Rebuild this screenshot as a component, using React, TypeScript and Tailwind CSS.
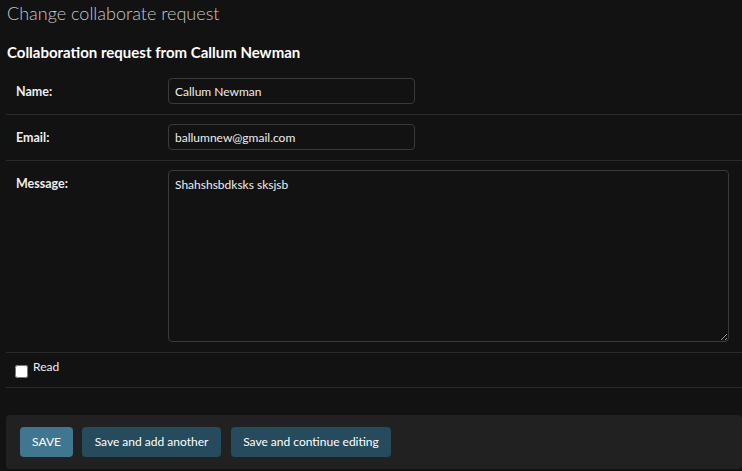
import React from "react";

function Row({ label, children }: { label: string; children: React.ReactNode }) {
    return (
        <div className="flex items-start px-[10px] pt-[9px] pb-[10px] border-b border-[#2a2a2a]">
            <label className="w-[152px] shrink-0 pt-[7px] text-[12.5px] leading-[14px] font-bold text-[#eeeeee]">{label}</label>
            {children}
        </div>
    );
}

export default function App() {
    return (
        <div className="min-h-[471px] w-full bg-[#121212] text-[#eeeeee] overflow-hidden" style={{ fontFamily: 'Lato, "Noto Sans", sans-serif' }}>
            <div className="pl-[6px]">
                <h1 className="pt-[1px] pl-[1px] text-[18px] leading-[24px] font-light text-[#c8c8c8]">Change collaborate request</h1>
                <h2 className="mt-[18px] pl-[1px] text-[15px] leading-[18px] font-bold text-white">Collaboration request from Callum Newman</h2>

                <div className="mt-[8px]">
                    <Row label="Name:">
                        <input
                            type="text"
                            defaultValue="Callum Newman"
                            className="h-[26px] w-[247px] rounded-[4px] border border-[#3a3a3a] bg-[#121212] px-[6px] text-[12px] text-[#eeeeee] outline-none"
                        />
                    </Row>
                    <Row label="Email:">
                        <input
                            type="text"
                            defaultValue="ballumnew@gmail.com"
                            className="h-[26px] w-[247px] rounded-[4px] border border-[#3a3a3a] bg-[#121212] px-[6px] text-[12px] text-[#eeeeee] outline-none"
                        />
                    </Row>
                    <Row label="Message:">
                        <textarea
                            defaultValue="Shahshsbdksks sksjsb"
                            className="block h-[172px] w-[561px] rounded-[4px] border border-[#3a3a3a] bg-[#121212] px-[6px] py-[6px] text-[12px] leading-[16px] text-[#eeeeee] outline-none"
                        />
                    </Row>
                    <div className="flex items-start gap-[5px] px-[9px] pt-[12px] border-b border-[#2a2a2a] h-[35px]">
                        <input type="checkbox" className="h-[13px] w-[13px]" />
                        <label className="-mt-[5px] text-[12px] leading-[14px] text-[#eeeeee]">Read</label>
                    </div>
                </div>

                <div className="mt-[27px] flex items-center rounded-[4px] bg-[#212121] px-[14px] py-[12px]">
                    <button className="h-[30px] w-[53px] rounded-[4px] bg-[#417690] text-[12px] text-white">SAVE</button>
                    <button className="ml-[9px] h-[30px] w-[139px] rounded-[4px] bg-[#264b5d] text-[12px] text-white">Save and add another</button>
                    <button className="ml-[10px] h-[30px] w-[160px] rounded-[4px] bg-[#264b5d] text-[12px] text-white">Save and continue editing</button>
                </div>
            </div>
        </div>
    );
}
